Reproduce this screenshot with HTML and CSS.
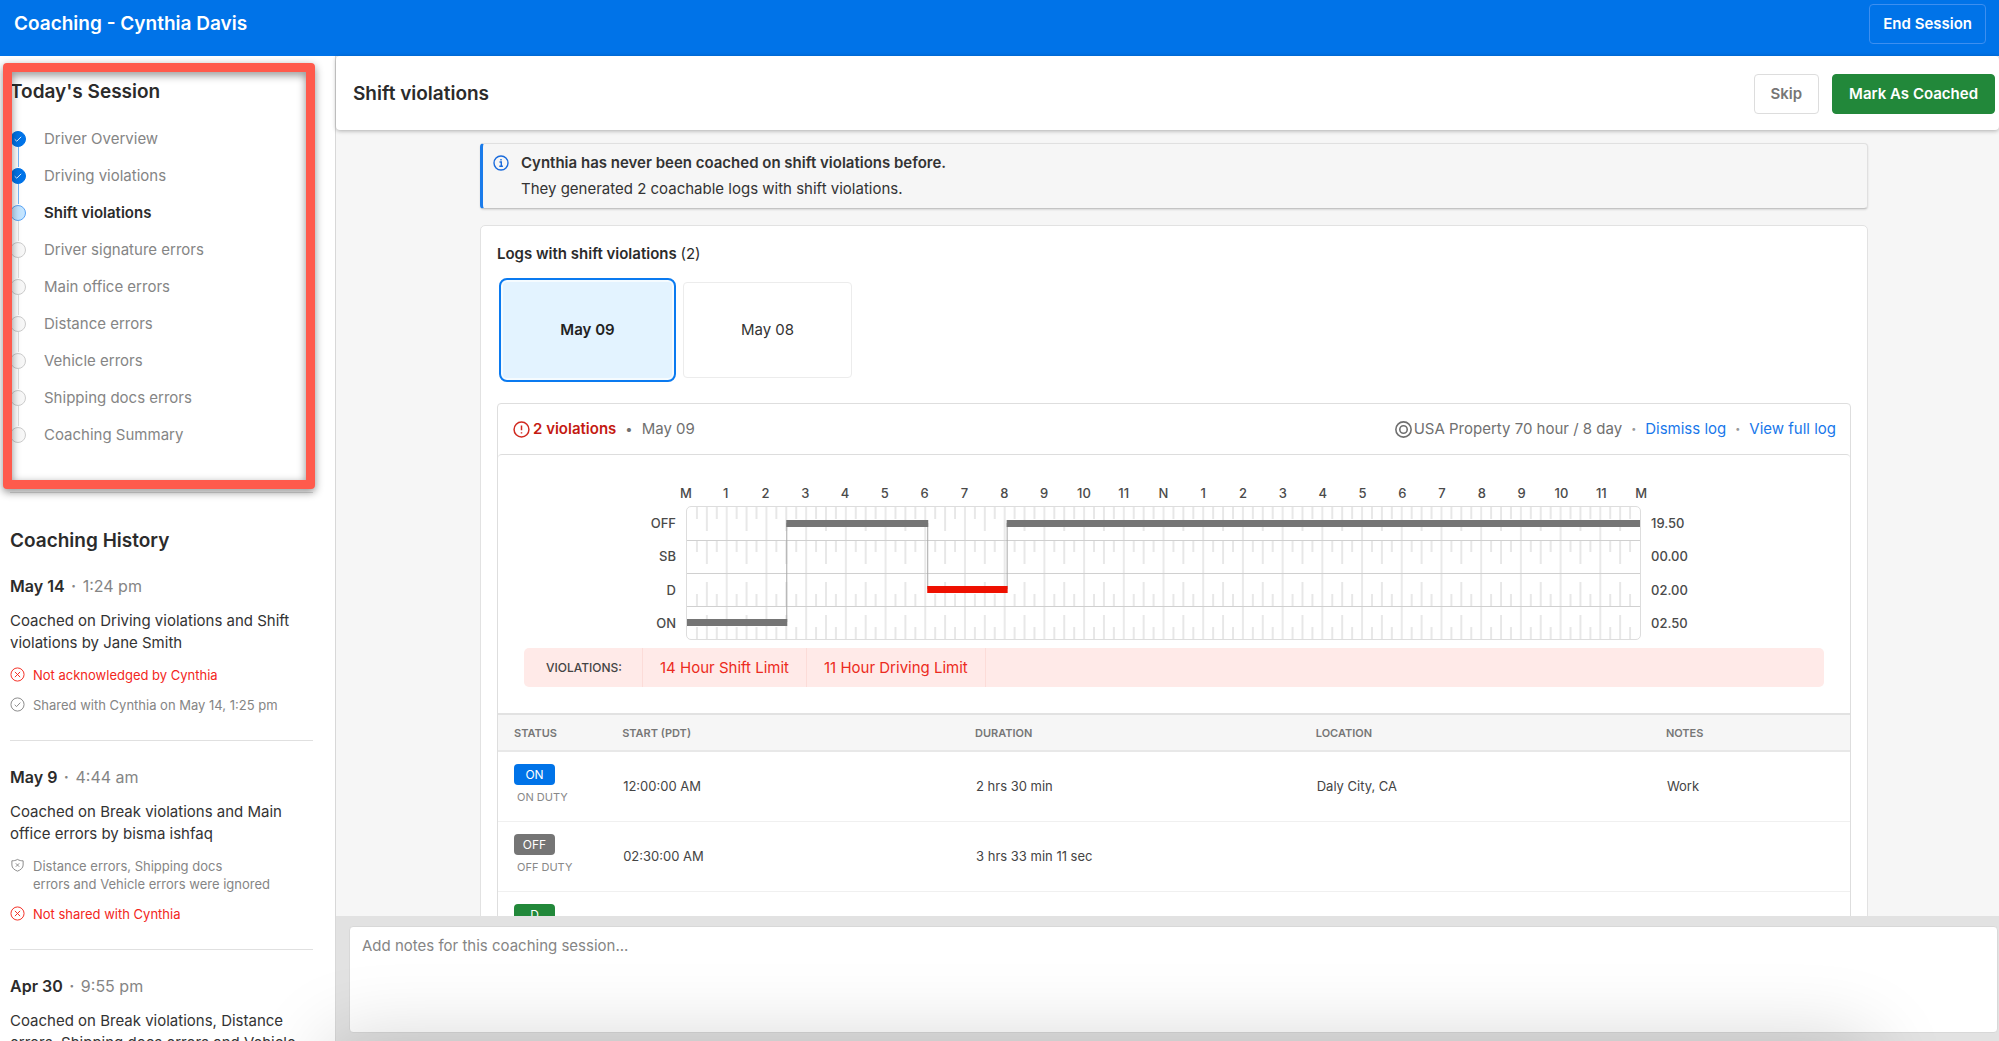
FILE: index.html
```html
<!DOCTYPE html>
<html lang="en">
<head>
<meta charset="utf-8">
<meta name="viewport" content="width=device-width, initial-scale=1">
<title>Coaching - Cynthia Davis</title>
<link rel="stylesheet" href="styles.css">
</head>
<body>
<svg class="sprite" aria-hidden="true">
  <symbol id="i-x" viewBox="0 0 16 16"><circle cx="8" cy="8" r="7"/><path d="M5.200 5.200l5.600 5.600M10.800 5.200l-5.600 5.600"/></symbol>
  <symbol id="i-check" viewBox="0 0 16 16"><circle cx="8" cy="8" r="7"/><path d="M5 8.300l2 1.900 4-4.200"/></symbol>
  <symbol id="i-shield" viewBox="0 0 16 16"><path d="M8 1.500c2 1.200 4 1.500 6 1.500v4.500c0 3-2.500 5.200-6 6.500-3.500-1.300-6-3.500-6-6.500V3c2 0 4-.3 6-1.500z"/><path d="M6.200 5.700l3.600 3.600M9.800 5.700L6.200 9.300"/></symbol>
  <symbol id="i-tick" viewBox="0 0 16 16"><path d="M4.200 8.300l2.400 2.200 5-5"/></symbol>
</svg>

<header class="topbar">
  <h1 class="topbar-title">Coaching - Cynthia Davis</h1>
  <button class="btn btn-outline" type="button">End Session</button>
</header>

<div class="layout">
  <aside class="sidebar">
    <section class="session">
      <h2 class="heading">Today's Session</h2>
      <ol class="steps">
        <li class="step done"><svg class="dot" aria-hidden="true"><use href="#i-tick"/></svg>Driver Overview</li>
        <li class="step done"><svg class="dot" aria-hidden="true"><use href="#i-tick"/></svg>Driving violations</li>
        <li class="step current"><span class="dot"></span>Shift violations</li>
        <li class="step"><span class="dot"></span>Driver signature errors</li>
        <li class="step"><span class="dot"></span>Main office errors</li>
        <li class="step"><span class="dot"></span>Distance errors</li>
        <li class="step"><span class="dot"></span>Vehicle errors</li>
        <li class="step"><span class="dot"></span>Shipping docs errors</li>
        <li class="step"><span class="dot"></span>Coaching Summary</li>
      </ol>
      <div class="highlight"></div>
    </section>

    <section class="history">
      <h2 class="heading">Coaching History</h2>
      <article class="entry">
        <p class="when"><strong>May 14</strong> <span class="mid">·</span> 1:24 pm</p>
        <p class="what">Coached on Driving violations and Shift violations by Jane Smith</p>
        <p class="note bad"><svg class="ico" aria-hidden="true"><use href="#i-x"/></svg><span>Not acknowledged by Cynthia</span></p>
        <p class="note"><svg class="ico" aria-hidden="true"><use href="#i-check"/></svg><span>Shared with Cynthia on May 14, 1:25 pm</span></p>
      </article>
      <article class="entry">
        <p class="when"><strong>May 9</strong> <span class="mid">·</span> 4:44 am</p>
        <p class="what">Coached on Break violations and Main office errors by bisma ishfaq</p>
        <p class="note"><svg class="ico" aria-hidden="true"><use href="#i-shield"/></svg><span>Distance errors, Shipping docs<br>errors and Vehicle errors were ignored</span></p>
        <p class="note bad"><svg class="ico" aria-hidden="true"><use href="#i-x"/></svg><span>Not shared with Cynthia</span></p>
      </article>
      <article class="entry">
        <p class="when"><strong>Apr 30</strong> <span class="mid">·</span> 9:55 pm</p>
        <p class="what">Coached on Break violations, Distance errors, Shipping docs errors and Vehicle errors</p>
      </article>
    </section>
  </aside>

  <main class="main">
    <div class="pagebar">
      <h2 class="heading">Shift violations</h2>
      <button class="btn btn-plain" type="button">Skip</button>
      <button class="btn btn-green" type="button">Mark As Coached</button>
    </div>

    <div class="scroll">
      <div class="banner">
        <svg class="info" viewBox="0 0 16 16" aria-hidden="true"><circle cx="8" cy="8" r="7"/><path d="M6.500 7H8.300v4M6.300 11.300h3.600"/><path d="M8 4v1.500"/></svg>
        <div>
          <p class="banner-title">Cynthia has never been coached on shift violations before.</p>
          <p>They generated 2 coachable logs with shift violations.</p>
        </div>
      </div>

      <section class="card">
        <h3 class="card-title">Logs with shift violations <span>(2)</span></h3>
        <div class="days">
          <button class="day selected" type="button">May 09</button>
          <button class="day" type="button">May 08</button>
        </div>

        <div class="log">
          <div class="log-head">
            <svg class="warn" viewBox="0 0 16 16" aria-hidden="true"><circle cx="8" cy="8" r="7"/><path d="M8 4.200v4.600M8 10.500v1.300"/></svg>
            <strong>2 violations</strong><span class="bullet">•</span><span class="log-date">May 09</span>
            <svg class="ring" viewBox="0 0 16 16" aria-hidden="true"><circle cx="8" cy="8" r="7.200"/><circle cx="8" cy="8" r="3.500"/></svg>
            <span>USA Property 70 hour / 8 day</span><span class="sep">•</span><a href="#dismiss">Dismiss log</a><span class="sep">•</span><a href="#full">View full log</a>
          </div>

          <div class="log-body">
            <div class="chart">
              <div class="hours"><span>M</span><span>1</span><span>2</span><span>3</span><span>4</span><span>5</span><span>6</span><span>7</span><span>8</span><span>9</span><span>10</span><span>11</span><span>N</span><span>1</span><span>2</span><span>3</span><span>4</span><span>5</span><span>6</span><span>7</span><span>8</span><span>9</span><span>10</span><span>11</span><span>M</span></div>
              <div class="rows rows-left"><span>OFF</span><span>SB</span><span>D</span><span>ON</span></div>
              <div class="plot">
                <svg viewBox="0 0 960 132" preserveAspectRatio="none" role="img" aria-label="Duty status over 24 hours">
                  <defs>
                    <pattern id="down" width="40" height="33" patternUnits="userSpaceOnUse"><path class="tick" d="M10 0v12M20 0v24M30 0v12"/></pattern>
                    <pattern id="up" width="40" height="33" patternUnits="userSpaceOnUse"><path class="tick" d="M10 33v-12M20 33v-24M30 33v-12"/></pattern>
                    <pattern id="hour" width="40" height="132" patternUnits="userSpaceOnUse" x="20"><path class="line" d="M20 0v132"/></pattern>
                  </defs>
                  <rect class="fill" width="960" height="66" fill="url(#down)"/>
                  <rect class="fill" y="66" width="960" height="66" fill="url(#up)"/>
                  <rect class="fill" x="20" width="920" height="132" fill="url(#hour)"/>
                  <path class="line rule" d="M0 33.500h960M0 66.500h960M0 99.500h960"/>
                  <path class="link" d="M100.500 16V115M242.500 16V82M322.500 16V82"/>
                  <path class="duty" d="M0 115.500H101M100 16.500H243M322 16.500H960"/>
                  <path class="duty late" d="M242 82.500H323"/>
                </svg>
              </div>
              <div class="rows rows-right"><span>19.50</span><span>00.00</span><span>02.00</span><span>02.50</span></div>
            </div>
            <div class="violations"><strong>VIOLATIONS:</strong><span>14 Hour Shift Limit</span><span>11 Hour Driving Limit</span></div>
          </div>

          <table class="events">
            <thead><tr><th class="c-status">STATUS</th><th class="c-start">START (PDT)</th><th class="c-dur">DURATION</th><th class="c-loc">LOCATION</th><th>NOTES</th></tr></thead>
            <tbody>
              <tr><td><span class="badge blue">ON</span><small>ON DUTY</small></td><td>12:00:00 AM</td><td>2 hrs 30 min</td><td>Daly City, CA</td><td>Work</td></tr>
              <tr><td><span class="badge grey">OFF</span><small>OFF DUTY</small></td><td>02:30:00 AM</td><td>3 hrs 33 min 11 sec</td><td></td><td></td></tr>
              <tr><td><span class="badge green">D</span><small>&nbsp;</small></td><td></td><td></td><td></td><td></td></tr>
            </tbody>
          </table>
        </div>
      </section>
    </div>

    <div class="notes"><textarea aria-label="Session notes" placeholder="Add notes for this coaching session..."></textarea></div>
  </main>
</div>
<div class="bottom-shade"></div>
</body>
</html>
```
FILE: styles.css
```css
* { box-sizing: border-box; }
body {
  margin: 0;
  height: 100vh;
  display: flex;
  flex-direction: column;
  overflow: hidden;
  background: #fff;
  color: #333;
  font: 15px/22px Inter, "Liberation Sans", sans-serif;
}
h1, h2, h3, p, ol { margin: 0; padding: 0; }
button, textarea { font: inherit; }
.sprite { position: absolute; width: 0; height: 0; }
svg { fill: none; stroke: currentColor; }

/* Top bar */
.topbar {
  display: flex;
  justify-content: space-between;
  align-items: flex-start;
  height: 56px;
  flex: none;
  padding: 4px 13px 0 14px;
  background: #0073e8;
  color: #fff;
}
.topbar-title { font-size: 19px; line-height: 40px; font-weight: 600; }
.btn {
  height: 40px;
  padding: 0 15px;
  border: 1px solid #ddd;
  border-radius: 4px;
  font-weight: 600;
  white-space: nowrap;
}
.btn-outline { padding: 0 13px; background: transparent; border-color: #3d8ff0; color: #fff; }
.btn-plain { padding: 0 16px; background: #fff; color: #767676; }
.btn-green { padding: 0 16px; background: #22883a; border-color: #22883a; color: #fff; }

.layout { flex: 1; display: flex; min-height: 0; }
.heading { font-size: 19px; line-height: 24px; font-weight: 600; color: #2b2b2b; }

/* Sidebar */
.sidebar {
  flex: none;
  width: 336px;
  padding: 0 22px 0 10px;
  border-right: 1px solid #d8d8d8;
  overflow: hidden;
}
.session {
  position: relative;
  padding: 24px 0 39px;
  border-bottom: 1px solid #ddd;
}
.steps { list-style: none; margin-top: 16px; }
.step {
  position: relative;
  display: flex;
  align-items: center;
  gap: 18px;
  height: 37px;
  color: #858585;
}
.dot {
  width: 16px;
  height: 16px;
  border: 1px solid #ccc;
  border-radius: 50%;
  background: #f7f7f7;
}
.step:not(:last-child)::after {
  content: "";
  position: absolute;
  left: 8px;
  top: 27px;
  height: 20px;
  width: 1px;
  background: #ddd;
}
.done .dot { background: #0073e8; border-color: #0073e8; color: #fff; }
.step.done::after { background: #73b4f8; }
.current { color: #2b2b2b; font-weight: 600; }
.current .dot { background: #c4e5ff; border-color: #5ba4f5; }
.highlight {
  position: absolute;
  inset: 7px -2px 3px -7px;
  border: 9px solid #ff5a4c;
  border-radius: 4px;
  filter: drop-shadow(0 3px 4px rgba(0, 0, 0, .45));
}
.history { padding-top: 36px; }
.entry { padding: 24px 0 26px; border-bottom: 1px solid #e0e0e0; }
.history .heading + .entry { padding-top: 21px; }
.when { font-size: 16px; line-height: 24px; color: #858585; }
.when strong { color: #2b2b2b; font-weight: 600; }
.mid { margin: 0 2px; font-weight: 600; }
.what { margin-top: 12px; color: #333; }
.note {
  display: flex;
  gap: 8px;
  margin-top: 12px;
  font-size: 13px;
  line-height: 18px;
  color: #858585;
}
.bad { color: #f3261c; }
.ico { width: 15px; height: 15px; margin-top: 1px; flex: none; }

/* Main column */
.main { flex: 1; min-width: 0; display: flex; flex-direction: column; background: #f6f6f6; }
.pagebar {
  position: relative;
  display: flex;
  align-items: center;
  gap: 13px;
  flex: none;
  height: 74px;
  padding: 1px 4px 0 17px;
  background: #fff;
  border-radius: 4px;
  box-shadow: 0 1px 4px rgba(0, 0, 0, .3);
}
.pagebar .heading { flex: 1; }
.scroll { flex: 1; min-height: 0; overflow: hidden; padding: 13px 131px 0 144px; }
.banner {
  display: flex;
  gap: 12px;
  padding: 8px 10px;
  border: 1px solid #e0e0e0;
  border-left: 3px solid #1a7bea;
  border-bottom-color: #c4c4c4;
  border-radius: 4px;
  background: #f6f6f6;
  box-shadow: 0 1px 2px rgba(0, 0, 0, .12);
  line-height: 24px;
  height: 66px;
  margin-bottom: 16px;
}
.banner p + p { margin-top: 3px; }
.banner-title { font-weight: 600; line-height: 22px; }
.info { width: 16px; height: 16px; margin-top: 3px; color: #1a6bdc; stroke-width: 1.400; }
.card { padding: 16px 16px 0; border: 1px solid #e2e2e2; border-radius: 5px; background: #fff; }
.card-title { font-size: 15px; line-height: 24px; font-weight: 600; color: #2b2b2b; }
.card-title span { font-weight: 400; }
.days { display: flex; align-items: center; gap: 7px; margin: 12px 0 21px; padding-left: 2px; }
.day {
  width: 169px;
  height: 96px;
  border: 1px solid #ececec;
  border-radius: 4px;
  background: #fff;
  color: #333;
}
.selected {
  width: 177px;
  height: 104px;
  border: 2px solid #0a7af0;
  border-radius: 8px;
  background: #e3f3ff;
  box-shadow: inset 0 0 0 2px #f5fbff;
  font-weight: 600;
  color: #222;
}
.log { border: 1px solid #dedede; border-radius: 4px; }
.log-head {
  display: flex;
  align-items: center;
  height: 50px;
  padding: 0 14px 0 15px;
  color: #707070;
  white-space: nowrap;
}
.log-head strong { color: #c41a12; font-weight: 600; margin-left: 3px; }
.log-head a { color: #1877ea; text-decoration: none; }
.warn, .ring { width: 17px; height: 17px; }
.warn { color: #d02a20; stroke-width: 1.400; }
.ring { margin-left: auto; margin-right: 2px; stroke-width: 1.500; }
.bullet { margin: 0 9px; font-size: 13px; }
.sep { margin: 0 9px; font-size: 9px; color: #999; }

.log-body { padding: 28px 26px 26px; border-top: 1px solid #ddd; border-radius: 4px; }

/* Duty status chart */
.chart {
  display: grid;
  grid-template-columns: 56px 1fr 56px;
  grid-template-rows: 23px 134px;
  column-gap: 10px;
  margin: 0 117px 0 96px;
  font-size: 13px;
  font-weight: 500;
  color: #4a4a4a;
}
.hours {
  grid-column: 2;
  display: grid;
  grid-template-columns: repeat(25, 1fr);
  margin: 0 -20px;
  text-align: center;
  line-height: 20px;
}
.rows { display: grid; grid-template-rows: repeat(4, 1fr); align-items: center; }
.rows-left { grid-column: 1; text-align: right; }
.plot { border: 1px solid #ddd; border-radius: 5px; }
.plot svg { display: block; width: 100%; height: 132px; }
.fill { stroke: none; }
.tick { stroke: #d0d0d0; }
.line { stroke: #d4d4d4; }
.rule { stroke: #d0d0d0; }
.link { stroke: #a8a8a8; }
.duty { stroke: #757575; stroke-width: 7; }
.late { stroke: #ee1000; }

.violations {
  display: flex;
  height: 39px;
  margin-top: 8px;
  line-height: 39px;
  border-radius: 5px;
  background: #ffeae8;
  color: #ec2a20;
}
.violations > * { padding: 0 17px; border-right: 1px solid #fcdcd8; }
.violations strong { padding: 0 20px 0 22px; font-size: 12px; font-weight: 500; color: #444; }

/* Events */
.events { width: 100%; table-layout: fixed; border-collapse: collapse; text-align: left; }
.events th {
  height: 37px;
  padding: 0 16px;
  border-top: 2px solid #e2e2e2;
  border-bottom: 2px solid #e8e8e8;
  background: #f6f6f6;
  font-size: 11px;
  font-weight: 600;
  color: #777;
}
.events td { height: 70px; padding: 0 17px; border-bottom: 1px solid #f0f0f0; font-size: 13px; color: #444; }
.events td:first-child { padding: 0 0 2px 16px; }
.c-status { width: 8%; }
.c-start { width: 26.1%; }
.c-dur { width: 25.2%; }
.c-loc { width: 25.9%; }
.badge {
  display: block;
  width: 41px;
  border-radius: 4px;
  text-align: center;
  line-height: 21px;
  color: #fff;
  font-size: 12px;
}
.blue { background: #0073e8; }
.grey { background: #757575; }
.green { background: #22883a; }
.events small { display: block; margin: 3px 0 0 3px; font-size: 11px; line-height: 18px; color: #888; }

/* Notes */
.notes { flex: none; display: flex; height: 125px; padding: 10px 1px 8px 13px; background: #e2e2e2; }
.notes textarea {
  flex: 1;
  padding: 8px 12px;
  border: 1px solid #d8d8d8;
  border-radius: 4px;
  background: #fff;
  resize: none;
}
.notes textarea::placeholder { color: #858585; opacity: 1; }

.bottom-shade {
  position: fixed;
  top: 100%;
  left: 330px;
  right: 130px;
  height: 100px;
  box-shadow: 0 0 80px rgba(0, 0, 0, .18);
  pointer-events: none;
}
```
